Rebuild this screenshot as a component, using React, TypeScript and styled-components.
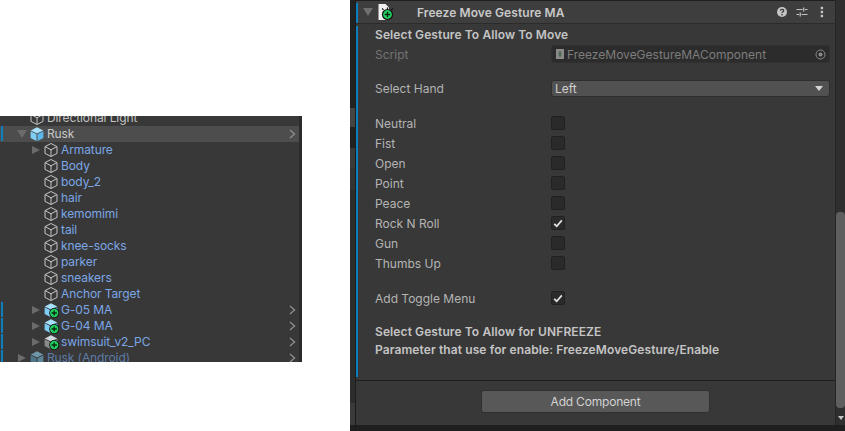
import React from 'react'
import styled, { createGlobalStyle } from 'styled-components'

const GlobalStyle = createGlobalStyle`
  html, body {
    margin: 0;
    background: #fff;
  }
  body {
    font-family: Inter, "Liberation Sans", sans-serif;
    font-size: 12px;
  }
`

const Page = styled.div`
  display: flex;
  align-items: flex-start;
  width: 845px;
  height: 431px;
  overflow: hidden;
`

const Hierarchy = styled.div`
  width: 302px;
  height: 246px;
  box-sizing: border-box;
  margin-top: 116px;
  margin-right: 48px;
  background: #383838;
  border-right: 3px solid #2b2b2b;
  overflow: hidden;
  flex-shrink: 0;
`

const TreeList = styled.div`
  margin-top: -6px;
`

const TreeRow = styled.div<{ $selected?: boolean }>`
  position: relative;
  display: flex;
  align-items: center;
  height: 16px;
  background: ${p => (p.$selected ? '#4d4d4d' : 'transparent')};
`

const ChangeMark = styled.span`
  position: absolute;
  left: 1px;
  top: 0;
  bottom: 1px;
  width: 2px;
  background: #0e7fbd;
`

const Foldout = styled.span<{ $indent: number; $open?: boolean; $hidden?: boolean }>`
  width: 0;
  height: 0;
  flex-shrink: 0;
  margin-left: ${p => p.$indent}px;
  margin-right: ${p => (p.$open ? 2 : 3)}px;
  visibility: ${p => (p.$hidden ? 'hidden' : 'visible')};
  ${p =>
    p.$open
      ? `border-left: 5px solid transparent; border-right: 5px solid transparent; border-top: 8px solid #6b6b6b;`
      : `border-top: 4.5px solid transparent; border-bottom: 4.5px solid transparent; border-left: 8px solid #6b6b6b;`}
`

const TreeLabel = styled.span<{ $tone: 'plain' | 'prefab' | 'dim' | 'white' }>`
  margin-left: 2px;
  margin-bottom: 2px;
  white-space: nowrap;
  letter-spacing: -0.1px;
  color: ${p =>
    p.$tone === 'prefab'
      ? '#7ba6e6'
      : p.$tone === 'dim'
        ? '#5d7ba6'
        : p.$tone === 'white'
          ? '#c8c8c8'
          : '#c4c4c4'};
`

const RowChevron = styled.svg`
  position: absolute;
  right: 3px;
  top: 3px;
  width: 7px;
  height: 10px;
`

const Inspector = styled.div`
  display: flex;
  width: 495px;
  height: 431px;
  flex-shrink: 0;
  background: #383838;
`

const Gutter = styled.div`
  width: 5px;
  flex-shrink: 0;
  border-right: 1px solid #1c1c1c;
  background: linear-gradient(
    to bottom,
    #222 0 108px,
    #444 108px 127px,
    #212121 127px 148px,
    #3a3a3a 148px 168px,
    #333 168px 190px,
    #2d2d2d 190px 403px,
    #3a3a3a 403px 425px,
    #1f1f1f 425px
  );
`

const InspectorMain = styled.div`
  flex: 1;
  display: flex;
  flex-direction: column;
  min-width: 0;
`

const ComponentHeader = styled.div`
  display: flex;
  align-items: center;
  height: 22px;
  padding-right: 11px;
  border-top: 1px solid #1f1f1f;
  border-bottom: 1px solid #2b2b2b;
  background: #3e3e3e;
  color: #c8c8c8;
  font-weight: 600;
  letter-spacing: 0.08px;
`

const HeaderBar = styled.span`
  width: 2px;
  height: 20px;
  margin-top: 1px;
  background: #0e7fbd;
  flex-shrink: 0;
`

const HeaderFold = styled.span`
  width: 0;
  height: 0;
  margin-left: 5px;
  margin-right: 5px;
  border-left: 5px solid transparent;
  border-right: 5px solid transparent;
  border-top: 8px solid #6f6f6f;
`

const HeaderTitle = styled.span`
  flex: 1;
  margin-left: 23px;
  white-space: nowrap;
`

const HeaderTools = styled.div`
  display: flex;
  align-items: center;
  gap: 8px;
`

const Body = styled.div`
  height: 351px;
  margin-top: 2px;
  padding-left: 17px;
  padding-right: 5px;
  border-left: 2px solid #0e7fbd;
  color: #b4b4b4;
`

const Heading = styled.div<{ $gap?: number }>`
  height: 18px;
  line-height: 18px;
  margin-top: ${p => p.$gap ?? 0}px;
  font-weight: 600;
  letter-spacing: 0.1px;
  color: #c4c4c4;
`

const FieldRow = styled.div<{ $height?: number; $gap?: number; $dim?: boolean }>`
  display: flex;
  align-items: center;
  height: ${p => p.$height ?? 20}px;
  margin-top: ${p => p.$gap ?? 0}px;
  color: ${p => (p.$dim ? '#747474' : 'inherit')};
`

const FieldLabel = styled.span`
  width: 176px;
  flex-shrink: 0;
  white-space: nowrap;
`

const ObjectField = styled.div`
  flex: 1;
  height: 18px;
  display: flex;
  align-items: center;
  box-sizing: border-box;
  padding-left: 4px;
  padding-right: 3px;
  border: 1px solid #303030;
  border-radius: 3px;
  background: #2c2c2c;
  color: #7d7d7d;
`

const FieldText = styled.span`
  flex: 1;
  margin-left: 3px;
  white-space: nowrap;
`

const Dropdown = styled.div`
  flex: 1;
  height: 17px;
  display: flex;
  align-items: center;
  justify-content: space-between;
  box-sizing: border-box;
  padding: 0 6px 0 3px;
  border: 1px solid #2e2e2e;
  border-radius: 3px;
  background: #515151;
  color: #cfcfcf;
`

const DropdownArrow = styled.span`
  width: 0;
  height: 0;
  border-left: 4px solid transparent;
  border-right: 4px solid transparent;
  border-top: 5px solid #d6d6d6;
`

const Checkbox = styled.span`
  width: 14px;
  height: 14px;
  display: flex;
  align-items: center;
  justify-content: center;
  box-sizing: border-box;
  border: 1px solid #212121;
  border-radius: 2px;
  background: #2a2a2a;
`

const Spacer = styled.div`
  height: 15px;
`

const Footer = styled.div`
  flex: 1;
  display: flex;
  flex-direction: column;
  align-items: center;
  margin-top: 3px;
  border-top: 1px solid #1e1e1e;
  padding-top: 9px;
`

const AddButton = styled.div`
  width: 229px;
  height: 23px;
  display: flex;
  align-items: center;
  justify-content: center;
  box-sizing: border-box;
  border: 1px solid #303030;
  border-radius: 3px;
  background: #585858;
  color: #d2d2d2;
  letter-spacing: -0.2px;
`

const BottomStrip = styled.div`
  height: 6px;
  background: #1f1f1f;
`

const MainBottom = styled.div`
  flex: 1;
  display: flex;
  flex-direction: column;
  min-height: 0;
`

const ScrollTrack = styled.div`
  position: relative;
  width: 10px;
  flex-shrink: 0;
  background: #2f2f2f;
  border-left: 1px solid #262626;
  box-sizing: border-box;
`

const ScrollThumb = styled.div`
  position: absolute;
  left: 0;
  right: 0;
  top: 212px;
  height: 196px;
  border-radius: 4px;
  background: #5f5f5f;
`

const ScrollArrow = styled.span`
  position: absolute;
  left: 2px;
  top: 416px;
  width: 0;
  height: 0;
  border-left: 3px solid transparent;
  border-right: 3px solid transparent;
  border-top: 4px solid #c4c4c4;
`

const ScrollFoot = styled.div`
  position: absolute;
  left: -1px;
  right: 0;
  bottom: 0;
  height: 6px;
  background: #1f1f1f;
`

const MoreSvg = styled.svg`
  margin-left: 4px;
`

const Cube = ({ kind }: { kind: 'outline' | 'blue' | 'badge' | 'hatch' | 'dim' }) => {
  const filled = kind !== 'outline'
  const top = kind === 'dim' ? '#6f96a8' : kind === 'hatch' ? '#cfd8dc' : '#a6e0fb'
  const left = kind === 'dim' ? '#4f7688' : kind === 'hatch' ? '#8a8a8a' : '#7fcdf5'
  const right = kind === 'dim' ? '#5c8496' : kind === 'hatch' ? '#a6a6a6' : '#5cb7ea'
  return (
    <svg width="16" height="16" viewBox="0 0 16 16" style={{ flexShrink: 0 }}>
      {filled ? (
        <>
          <path d="M8 1.2 14.2 4.4 8 7.6 1.8 4.4Z" fill={top} />
          <path d="M1.6 5.2 7.5 8.3V15L1.6 11.9Z" fill={left} />
          <path d="M14.4 5.2 8.5 8.3V15L14.4 11.9Z" fill={right} />
        </>
      ) : (
        <path
          d="M8 1.5 14 4.6V11.4L8 14.5 2 11.4V4.6ZM2 4.6 8 7.8 14 4.6M8 7.8V14.5"
          fill="none"
          stroke="#c4c4c4"
          strokeWidth="1"
          strokeLinejoin="round"
        />
      )}
      {(kind === 'badge' || kind === 'hatch') && (
        <>
          <circle cx="11.2" cy="11" r="5" fill="#0d0d0d" />
          <circle cx="11.2" cy="11" r="4.2" fill="#22cf60" />
          <path d="M11.2 8.4V13.6M8.6 11H13.8" stroke="#07240f" strokeWidth="1.3" />
        </>
      )}
    </svg>
  )
}

const Chevron = () => (
  <RowChevron viewBox="0 0 7 10">
    <path d="M1 1 5.5 5 1 9" fill="none" stroke="#8c8c8c" strokeWidth="1.4" />
  </RowChevron>
)

const ScriptIcon = () => (
  <svg width="16" height="18" viewBox="0 0 16 18" style={{ flexShrink: 0 }}>
    <path d="M0.5 1H7.5L11 4.5V17H0.5Z" fill="#f0f0f0" />
    <circle cx="9.5" cy="11.5" r="5.6" fill="#101010" />
    <circle cx="9.5" cy="11.5" r="4.4" fill="#22cf60" />
    <path d="M9.5 8.8V14.2M6.8 11.5H12.2" stroke="#07240f" strokeWidth="1.3" />
    <path d="M4.2 5.4 5.4 7M9.5 4.6V6M14.8 5.4 13.6 7" stroke="#101010" strokeWidth="1.2" />
  </svg>
)

const HelpIcon = () => (
  <svg width="12" height="12" viewBox="0 0 12 12">
    <circle cx="6" cy="6" r="5" fill="#c4c4c4" />
    <path d="M4.3 4.6C4.4 2.9 7.7 2.9 7.7 4.6 7.7 5.8 6 5.7 6 7.1" fill="none" stroke="#3e3e3e" strokeWidth="1.3" />
    <rect x="5.3" y="8" width="1.4" height="1.4" fill="#3e3e3e" />
  </svg>
)

const PresetIcon = () => (
  <svg width="12" height="12" viewBox="0 0 12 12">
    <path d="M0.5 3.5H6.5M9 3.5H11.5M0.5 8.5H3M5.5 8.5H11.5M7.7 1.5V5.5M4.2 6.5V10.5" stroke="#c4c4c4" strokeWidth="1.2" fill="none" />
  </svg>
)

const MoreIcon = () => (
  <MoreSvg width="4" height="12" viewBox="0 0 4 12">
    <rect x="0.7" y="0.8" width="2.4" height="2.4" fill="#c4c4c4" />
    <rect x="0.7" y="4.8" width="2.4" height="2.4" fill="#c4c4c4" />
    <rect x="0.7" y="8.8" width="2.4" height="2.4" fill="#c4c4c4" />
  </MoreSvg>
)

const TargetIcon = () => (
  <svg width="11" height="11" viewBox="0 0 11 11">
    <circle cx="5.5" cy="5.5" r="4.5" fill="none" stroke="#8a8a8a" />
    <circle cx="5.5" cy="5.5" r="2" fill="#8a8a8a" />
  </svg>
)

const FileGlyph = () => (
  <svg width="8" height="10" viewBox="0 0 8 10" style={{ flexShrink: 0 }}>
    <path d="M0 0H8V10H0Z" fill="#8a8a8a" />
    <path d="M4 2V8M2.5 4H5.5M2.5 6H5.5" stroke="#3b5f45" strokeWidth="1" />
  </svg>
)

const Tick = () => (
  <svg width="10" height="9" viewBox="0 0 10 9">
    <path d="M1.2 4.8 3.7 7.2 8.8 1.4" fill="none" stroke="#e2e2e2" strokeWidth="1.7" />
  </svg>
)

type Tree = {
  name: string
  cube: 'outline' | 'blue' | 'badge' | 'hatch' | 'dim'
  tone: 'plain' | 'prefab' | 'dim' | 'white'
  indent: number
  fold?: 'open' | 'closed'
  selected?: boolean
  mark?: boolean
  chevron?: boolean
}

const child = (name: string, fold?: 'closed'): Tree => ({
  name,
  cube: 'outline',
  tone: 'prefab',
  indent: 32,
  fold,
})

const tree: Tree[] = [
  { name: 'Directional Light', cube: 'outline', tone: 'plain', indent: 18 },
  { name: 'Rusk', cube: 'blue', tone: 'white', indent: 17, fold: 'open', selected: true, mark: true, chevron: true },
  child('Armature', 'closed'),
  child('Body'),
  child('body_2'),
  child('hair'),
  child('kemomimi'),
  child('tail'),
  child('knee-socks'),
  child('parker'),
  child('sneakers'),
  child('Anchor Target'),
  { name: 'G-05 MA', cube: 'badge', tone: 'prefab', indent: 32, fold: 'closed', mark: true, chevron: true },
  { name: 'G-04 MA', cube: 'badge', tone: 'prefab', indent: 32, fold: 'closed', mark: true, chevron: true },
  { name: 'swimsuit_v2_PC', cube: 'hatch', tone: 'prefab', indent: 32, fold: 'closed', mark: true, chevron: true },
  { name: 'Rusk (Android)', cube: 'dim', tone: 'dim', indent: 18, fold: 'closed', mark: true, chevron: true },
]

const gestures: [string, boolean][] = [
  ['Neutral', false],
  ['Fist', false],
  ['Open', false],
  ['Point', false],
  ['Peace', false],
  ['Rock N Roll', true],
  ['Gun', false],
  ['Thumbs Up', false],
]

export default function App() {
  return (
    <Page>
      <GlobalStyle />
      <Hierarchy>
        <TreeList>
          {tree.map(item => (
            <TreeRow key={item.name} $selected={item.selected}>
              {item.mark && <ChangeMark />}
              <Foldout $indent={item.indent} $open={item.fold === 'open'} $hidden={!item.fold} />
              <Cube kind={item.cube} />
              <TreeLabel $tone={item.tone}>{item.name}</TreeLabel>
              {item.chevron && <Chevron />}
            </TreeRow>
          ))}
        </TreeList>
      </Hierarchy>

      <Inspector>
        <Gutter />
        <InspectorMain>
          <ComponentHeader>
            <HeaderBar />
            <HeaderFold />
            <ScriptIcon />
            <HeaderTitle>Freeze Move Gesture MA</HeaderTitle>
            <HeaderTools>
              <HelpIcon />
              <PresetIcon />
              <MoreIcon />
            </HeaderTools>
          </ComponentHeader>
          <Body>
            <Heading>Select Gesture To Allow To Move</Heading>
            <FieldRow $dim>
              <FieldLabel>Script</FieldLabel>
              <ObjectField>
                <FileGlyph />
                <FieldText>FreezeMoveGestureMAComponent</FieldText>
                <TargetIcon />
              </ObjectField>
            </FieldRow>
            <FieldRow $gap={14}>
              <FieldLabel>Select Hand</FieldLabel>
              <Dropdown>
                Left
                <DropdownArrow />
              </Dropdown>
            </FieldRow>
            <Spacer />
            {gestures.map(([name, on]) => (
              <FieldRow key={name}>
                <FieldLabel>{name}</FieldLabel>
                <Checkbox>{on && <Tick />}</Checkbox>
              </FieldRow>
            ))}
            <FieldRow $gap={15}>
              <FieldLabel>Add Toggle Menu</FieldLabel>
              <Checkbox>
                <Tick />
              </Checkbox>
            </FieldRow>
            <Heading $gap={15}>Select Gesture To Allow for UNFREEZE</Heading>
            <Heading>Parameter that use for enable: FreezeMoveGesture/Enable</Heading>
          </Body>
          <MainBottom>
            <Footer>
              <AddButton>Add Component</AddButton>
            </Footer>
            <BottomStrip />
          </MainBottom>
        </InspectorMain>
        <ScrollTrack>
          <ScrollThumb />
          <ScrollArrow />
          <ScrollFoot />
        </ScrollTrack>
      </Inspector>
    </Page>
  )
}
